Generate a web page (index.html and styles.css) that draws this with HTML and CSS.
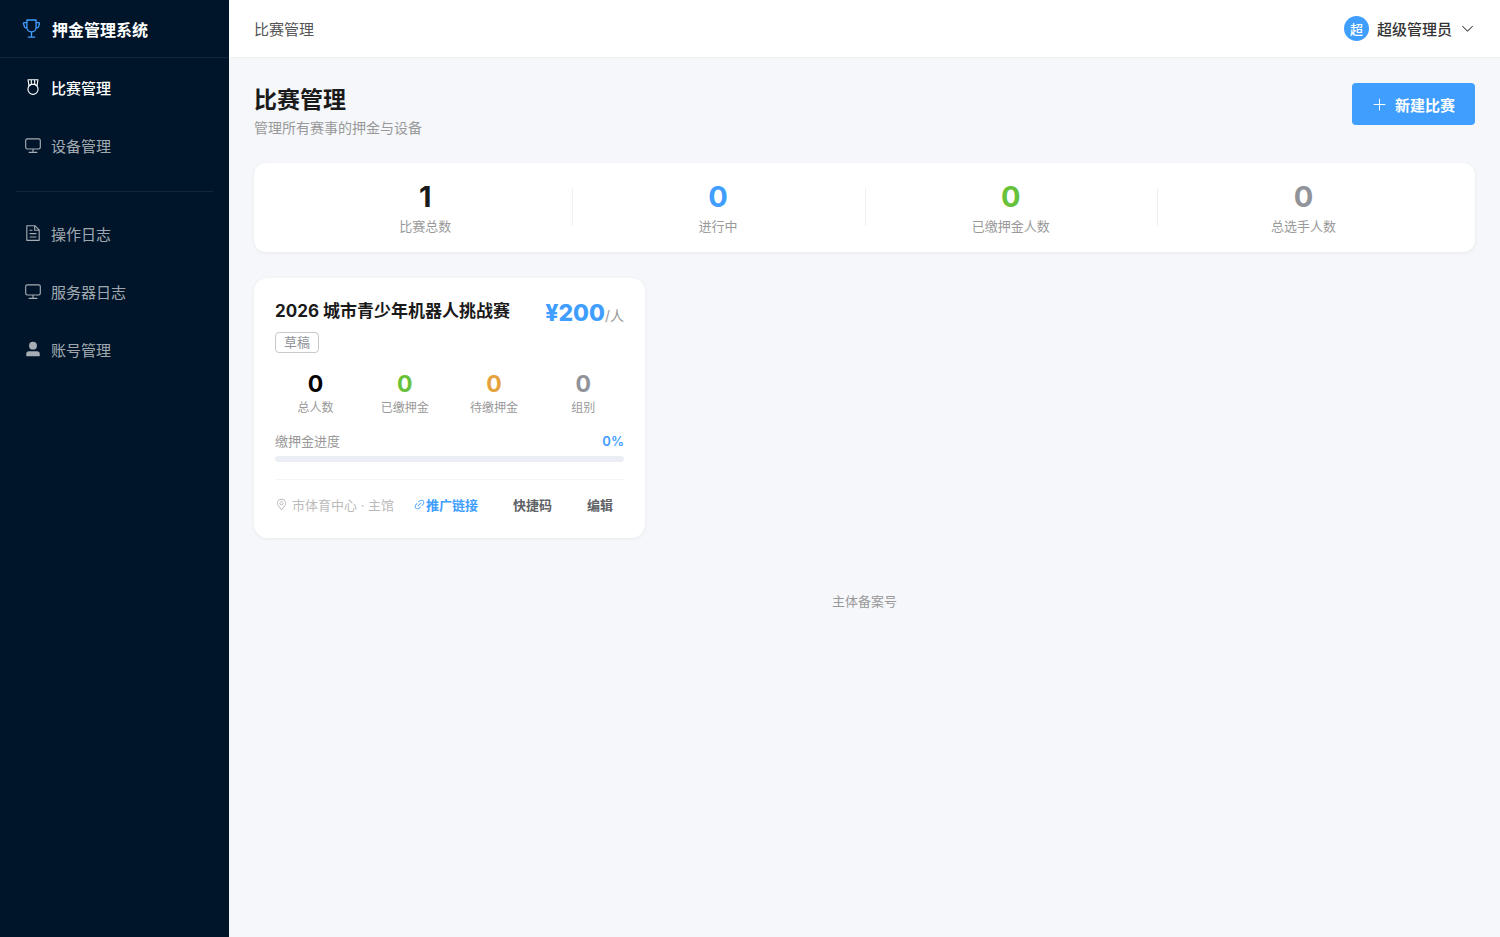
FILE: index.html
```
<!DOCTYPE html>
<html lang="zh-CN">

<head>
    <meta charset="UTF-8">
    <meta name="viewport" content="width=device-width, initial-scale=1.0">
    <title>押金管理系统</title>
    <link rel="stylesheet" href="styles.css">
</head>

<body>
    <div class="layout">
        <aside class="sidebar">
            <div class="logo">
                <svg class="icon logo-icon" viewBox="0 0 1024 1024"><path d="M480 896V702.08A256.256 256.256 0 0 1 264.064 512h-32.64a96 96 0 0 1-91.968-68.416L93.632 290.88a76.8 76.8 0 0 1 73.6-98.88H256V96a32 32 0 0 1 32-32h448a32 32 0 0 1 32 32v96h88.768a76.8 76.8 0 0 1 73.6 98.88L884.48 443.52A96 96 0 0 1 792.576 512h-32.64A256.256 256.256 0 0 1 544 702.08V896h128a32 32 0 1 1 0 64H352a32 32 0 1 1 0-64h128zm224-448V128H320v320a192 192 0 1 0 384 0zm64 0h24.576a32 32 0 0 0 30.656-22.784l45.824-152.768A12.8 12.8 0 0 0 856.768 256H768v192zm-512 0V256h-88.768a12.8 12.8 0 0 0-12.288 16.448l45.824 152.768A32 32 0 0 0 231.424 448H256z"/></svg>
                <span>押金管理系统</span>
            </div>
            <nav class="menu">
                <a class="menu-item active" href="#">
                    <svg class="icon" viewBox="0 0 1024 1024"><path d="M512 896a256 256 0 1 0 0-512 256 256 0 0 0 0 512zm0 64a320 320 0 1 1 0-640 320 320 0 0 1 0 640z"/><path d="M576 128H448v200a286.72 286.72 0 0 1 64-8c19.52 0 40.832 2.688 64 8V128zm64 0v219.648c24.448 9.088 50.56 20.416 78.4 33.92L757.44 128H640zm-256 0H266.624l39.04 253.568c27.84-13.504 53.888-24.832 78.336-33.92V128zM229.312 64h565.376a32 32 0 0 1 31.616 36.864L768 480c-113.792-64-199.104-96-256-96-56.896 0-142.208 32-256 96l-58.304-379.136A32 32 0 0 1 229.312 64z"/></svg>
                    <span>比赛管理</span>
                </a>
                <a class="menu-item" href="#">
                    <svg class="icon" viewBox="0 0 1024 1024"><path d="M544 768v128h192a32 32 0 1 1 0 64H288a32 32 0 1 1 0-64h192V768H192A128 128 0 0 1 64 640V256a128 128 0 0 1 128-128h640a128 128 0 0 1 128 128v384a128 128 0 0 1-128 128H544zM192 192a64 64 0 0 0-64 64v384a64 64 0 0 0 64 64h640a64 64 0 0 0 64-64V256a64 64 0 0 0-64-64H192z"/></svg>
                    <span>设备管理</span>
                </a>
                <div class="menu-divider"></div>
                <a class="menu-item" href="#">
                    <svg class="icon" viewBox="0 0 1024 1024"><path d="M832 384H576V128H192v768h640V384zm-26.496-64L640 154.496V320h165.504zM160 64h480l256 256v608a32 32 0 0 1-32 32H160a32 32 0 0 1-32-32V96a32 32 0 0 1 32-32zm160 448h384v64H320v-64zm0-192h160v64H320v-64zm0 384h384v64H320v-64z"/></svg>
                    <span>操作日志</span>
                </a>
                <a class="menu-item" href="#">
                    <svg class="icon" viewBox="0 0 1024 1024"><path d="M544 768v128h192a32 32 0 1 1 0 64H288a32 32 0 1 1 0-64h192V768H192A128 128 0 0 1 64 640V256a128 128 0 0 1 128-128h640a128 128 0 0 1 128 128v384a128 128 0 0 1-128 128H544zM192 192a64 64 0 0 0-64 64v384a64 64 0 0 0 64 64h640a64 64 0 0 0 64-64V256a64 64 0 0 0-64-64H192z"/></svg>
                    <span>服务器日志</span>
                </a>
                <a class="menu-item" href="#">
                    <svg class="icon" viewBox="0 0 1024 1024"><path d="M288 320a224 224 0 1 0 448 0 224 224 0 1 0-448 0zm544 608H160a32 32 0 0 1-32-32v-96a160 160 0 0 1 160-160h448a160 160 0 0 1 160 160v96a32 32 0 0 1-32 32z"/></svg>
                    <span>账号管理</span>
                </a>
            </nav>
        </aside>

        <div class="main">
            <header class="topbar">
                <span class="breadcrumb">比赛管理</span>
                <button class="user" type="button">
                    <span class="avatar">超</span>
                    <span>超级管理员</span>
                    <svg class="icon user-arrow" viewBox="0 0 1024 1024"><path d="M831.872 340.864 512 652.672 192.128 340.864a30.592 30.592 0 0 0-42.752 0 29.12 29.12 0 0 0 0 41.6L489.664 714.24a32 32 0 0 0 44.672 0l340.288-331.712a29.12 29.12 0 0 0 0-41.728 30.592 30.592 0 0 0-42.752 0z"/></svg>
                </button>
            </header>

            <main class="content">
                <div class="page-header">
                    <div>
                        <h1>比赛管理</h1>
                        <p class="subtitle">管理所有赛事的押金与设备</p>
                    </div>
                    <button class="btn-primary" type="button">
                        <svg class="icon btn-icon" viewBox="0 0 1024 1024"><path d="M480 480V128a32 32 0 0 1 64 0v352h352a32 32 0 1 1 0 64H544v352a32 32 0 1 1-64 0V544H128a32 32 0 0 1 0-64h352z"/></svg>
                        <span>新建比赛</span>
                    </button>
                </div>

                <section class="stats">
                    <div class="stat">
                        <div class="stat-num">1</div>
                        <div class="stat-label">比赛总数</div>
                    </div>
                    <div class="stat">
                        <div class="stat-num blue">0</div>
                        <div class="stat-label">进行中</div>
                    </div>
                    <div class="stat">
                        <div class="stat-num green">0</div>
                        <div class="stat-label">已缴押金人数</div>
                    </div>
                    <div class="stat">
                        <div class="stat-num gray">0</div>
                        <div class="stat-label">总选手人数</div>
                    </div>
                </section>

                <section class="card-grid">
                    <article class="card">
                        <div class="card-top">
                            <div>
                                <h2>2026 城市青少年机器人挑战赛</h2>
                                <span class="tag">草稿</span>
                            </div>
                            <div class="price">¥200<span class="price-unit">/人</span></div>
                        </div>

                        <div class="card-stats">
                            <div>
                                <div class="num black">0</div>
                                <div class="num-label">总人数</div>
                            </div>
                            <div>
                                <div class="num green">0</div>
                                <div class="num-label">已缴押金</div>
                            </div>
                            <div>
                                <div class="num orange">0</div>
                                <div class="num-label">待缴押金</div>
                            </div>
                            <div>
                                <div class="num gray">0</div>
                                <div class="num-label">组别</div>
                            </div>
                        </div>

                        <div class="progress-head">
                            <span>缴押金进度</span>
                            <span class="percent">0%</span>
                        </div>
                        <div class="progress">
                            <div class="progress-inner" style="width: 0%"></div>
                        </div>

                        <div class="card-footer">
                            <span class="place">
                                <svg class="icon small-icon" viewBox="0 0 1024 1024"><path d="M800 416a288 288 0 1 0-576 0c0 118.144 94.528 272.128 288 456.576C705.472 688.128 800 534.144 800 416zM512 960C277.312 746.688 160 565.312 160 416a352 352 0 0 1 704 0c0 149.312-117.312 330.688-352 544z"/><path d="M512 512a96 96 0 1 0 0-192 96 96 0 0 0 0 192zm0 64a160 160 0 1 1 0-320 160 160 0 0 1 0 320z"/></svg>
                                <span>市体育中心 · 主馆</span>
                            </span>
                            <div class="actions">
                                <button class="btn-text link" type="button">
                                    <svg class="icon small-icon" viewBox="0 0 1024 1024"><path d="M715.648 625.152 670.4 579.904l90.496-90.56c75.008-74.944 85.12-186.368 22.656-248.896-62.528-62.464-173.952-52.352-248.96 22.656L444.16 353.6l-45.248-45.248 90.496-90.496c100.032-99.968 251.968-110.08 339.456-22.656 87.488 87.488 77.312 239.424-22.656 339.456l-90.496 90.496zm-90.496 90.496-90.496 90.496C434.624 906.112 282.688 916.224 195.2 828.8c-87.488-87.488-77.312-239.424 22.656-339.456l90.496-90.496 45.248 45.248-90.496 90.56c-75.008 74.944-85.12 186.368-22.656 248.896 62.528 62.464 173.952 52.352 248.96-22.656l90.496-90.496 45.248 45.248zm0-362.048 45.248 45.248L398.848 670.4 353.6 625.152 625.152 353.6z"/></svg>
                                    <span>推广链接</span>
                                </button>
                                <button class="btn-text" type="button">快捷码</button>
                                <button class="btn-text" type="button">编辑</button>
                            </div>
                        </div>
                    </article>
                </section>

                <footer class="record">主体备案号</footer>
            </main>
        </div>
    </div>
</body>

</html>
```

FILE: styles.css
```
* {
    box-sizing: border-box;
}

body {
    margin: 0;
    font-family: Inter, "Noto Sans CJK SC", sans-serif;
    font-size: 15px;
    color: #1a1a1a;
    background-color: #f5f7fb;
}

h1,
h2,
p {
    margin: 0;
}

button {
    font-family: inherit;
    border: none;
    cursor: pointer;
}

.icon {
    width: 18px;
    height: 18px;
    fill: currentColor;
    flex-shrink: 0;
}

.layout {
    display: flex;
    min-height: 100vh;
}

/* sidebar */
.sidebar {
    width: 229px;
    flex-shrink: 0;
    background-color: #001529;
}

.logo {
    display: flex;
    align-items: center;
    gap: 10px;
    height: 58px;
    padding: 0 21px;
    color: #fff;
    font-size: 16px;
    font-weight: 700;
    border-bottom: 1px solid rgba(255, 255, 255, 0.08);
}

.logo-icon {
    width: 21px;
    height: 21px;
    color: #409eff;
}

.menu-item {
    display: flex;
    align-items: center;
    gap: 9px;
    height: 58px;
    padding: 0 24px;
    color: rgba(255, 255, 255, 0.65);
    font-size: 15px;
    text-decoration: none;
}

.menu-item.active {
    color: #fff;
    font-weight: 500;
}

.menu-divider {
    height: 1px;
    margin: 17px 16px 12px;
    background-color: rgba(255, 255, 255, 0.08);
}

/* header */
.main {
    flex: 1;
    min-width: 0;
}

.topbar {
    display: flex;
    align-items: center;
    justify-content: space-between;
    height: 58px;
    padding: 0 25px;
    background-color: #fff;
    border-bottom: 1px solid #f0f0f0;
}

.breadcrumb {
    color: #555;
}

.user {
    display: flex;
    align-items: center;
    gap: 8px;
    padding: 0;
    background: none;
    color: #333;
    font-size: 15px;
    font-weight: 500;
}

.avatar {
    display: flex;
    align-items: center;
    justify-content: center;
    width: 25px;
    height: 25px;
    border-radius: 50%;
    background-color: #409eff;
    color: #fff;
    font-size: 13px;
}

.user-arrow {
    width: 15px;
    height: 15px;
}

/* page */
.content {
    padding: 25px;
}

.page-header {
    display: flex;
    align-items: flex-start;
    justify-content: space-between;
    margin-bottom: 24px;
}

h1 {
    font-size: 23px;
    line-height: 34px;
    font-weight: 700;
}

.subtitle {
    color: #999;
    font-size: 14px;
    line-height: 22px;
}

.btn-primary {
    display: flex;
    align-items: center;
    justify-content: center;
    gap: 8px;
    height: 42px;
    padding: 0 20px;
    border-radius: 4px;
    background-color: #409eff;
    color: #fff;
    font-size: 15px;
    font-weight: 600;
}

.btn-icon {
    width: 15px;
    height: 15px;
}

.btn-primary:hover {
    background-color: #79bbff;
}

.stats {
    display: flex;
    align-items: center;
    height: 89px;
    margin-bottom: 26px;
    padding: 0 25px;
    border-radius: 12px;
    background-color: #fff;
    box-shadow: 0 1px 4px rgba(0, 0, 0, 0.06);
}

.stat {
    flex: 1;
    position: relative;
    text-align: center;
}

.stat + .stat::before {
    content: "";
    position: absolute;
    left: 0;
    top: 9px;
    width: 1px;
    height: 38px;
    background-color: #f0f0f0;
}

.stat-num {
    font-size: 29px;
    line-height: 36px;
    font-weight: 700;
}

.stat-label {
    margin-top: 2px;
    color: #999;
    font-size: 13px;
    line-height: 19px;
}

.black {
    color: #000;
}

.blue {
    color: #409eff;
}

.green {
    color: #67c23a;
}

.orange {
    color: #e6a23c;
}

.gray {
    color: #909399;
}

/* competition card */
.card-grid {
    display: grid;
    grid-template-columns: repeat(auto-fill, minmax(354px, 1fr));
    gap: 24px;
}

.card {
    padding: 21px;
    border-radius: 14px;
    background-color: #fff;
    box-shadow: 0 1px 4px rgba(0, 0, 0, 0.06);
}

.card-top {
    display: flex;
    justify-content: space-between;
    margin-bottom: 16px;
}

h2 {
    font-size: 17px;
    line-height: 24px;
    font-weight: 700;
}

.tag {
    display: inline-block;
    margin-top: 9px;
    padding: 0 8px;
    border: 1px solid #c8c9cc;
    border-radius: 4px;
    color: #909399;
    font-size: 13px;
    line-height: 19px;
}

.price {
    color: #409eff;
    font-size: 23px;
    line-height: 28px;
    font-weight: 800;
    white-space: nowrap;
}

.price-unit {
    color: #999;
    font-size: 14px;
    font-weight: 400;
}

.card-stats {
    display: grid;
    grid-template-columns: repeat(4, 1fr);
    gap: 8px;
    margin-bottom: 16px;
    text-align: center;
}

.num {
    font-size: 23px;
    line-height: 30px;
    font-weight: 700;
}

.num-label {
    color: #999;
    font-size: 12px;
    line-height: 17px;
}

.progress-head {
    display: flex;
    align-items: center;
    justify-content: space-between;
    margin-bottom: 6px;
    color: #999;
    font-size: 13px;
    line-height: 18px;
}

.percent {
    color: #409eff;
    font-weight: 600;
}

.progress {
    height: 6px;
    border-radius: 3px;
    background-color: #ebeef5;
}

.progress-inner {
    height: 100%;
    border-radius: 3px;
    background-color: #409eff;
}

.card-footer {
    display: flex;
    align-items: center;
    justify-content: space-between;
    margin-top: 17px;
    padding-top: 12px;
    border-top: 1px solid #f5f5f5;
}

.place {
    display: flex;
    align-items: center;
    gap: 4px;
    color: #bbb;
    font-size: 13px;
    white-space: nowrap;
}

.small-icon {
    width: 13px;
    height: 13px;
}

.actions {
    display: flex;
    gap: 13px;
}

.btn-text {
    display: flex;
    align-items: center;
    height: 25px;
    padding: 0 11px;
    background: none;
    color: #606266;
    font-size: 13px;
    font-weight: 600;
    white-space: nowrap;
}

.btn-text.link {
    color: #409eff;
}

.record {
    margin-top: 52px;
    color: #999;
    font-size: 13px;
    line-height: 22px;
    text-align: center;
}
```
